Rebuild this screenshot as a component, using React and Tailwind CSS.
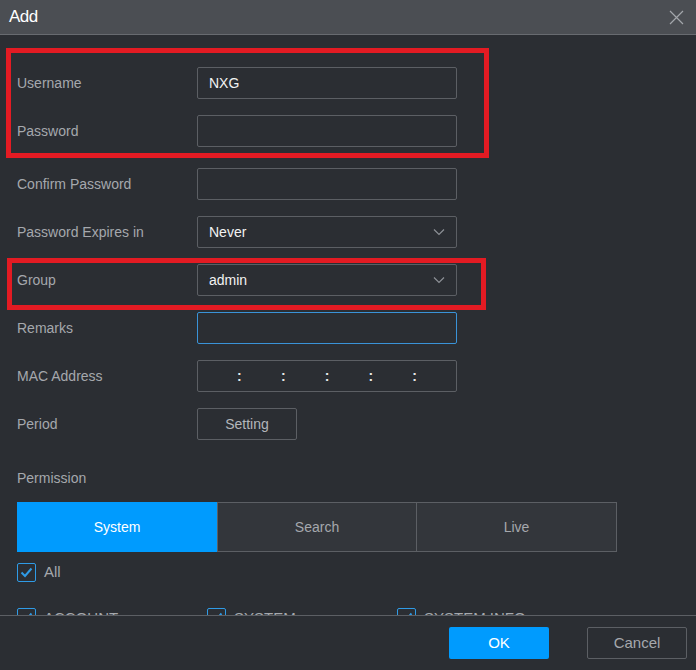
import React from 'react';

const Chevron = () => (
  <svg width="12" height="8" viewBox="0 0 12 8" className="text-[#8d9096]">
    <path d="M1 1.5 L6 6.5 L11 1.5" fill="none" stroke="currentColor" strokeWidth="1.2" />
  </svg>
);

const Check = ({ label }) => (
  <div className="flex items-center gap-[8px]">
    <div className="w-[19px] h-[19px] border border-[#2f9be6] rounded-[2px] flex items-center justify-center">
      <svg width="13" height="11" viewBox="0 0 13 11">
        <path d="M1.5 5.5 L5 9 L11.5 1.5" fill="none" stroke="#2f9be6" strokeWidth="2" />
      </svg>
    </div>
    <span className="text-[15px] text-[#a5a8ad]">{label}</span>
  </div>
);

const Row = ({ label, children, className = 'mb-4' }) => (
  <div className={`flex items-center h-8 ${className}`}>
    <div className="w-[180px] text-[14px] text-[#a5a8ad]">{label}</div>
    {children}
  </div>
);

const Box = ({ children, className = 'border-[#5c5f64]' }) => (
  <div className={`w-[260px] h-8 border rounded-[2px] flex items-center px-[11px] text-[14px] text-[#f2f2f2] ${className}`}>
    {children}
  </div>
);

export default function App() {
  return (
    <div
      className="relative w-[696px] h-[670px] flex flex-col bg-[#2b2e33] overflow-hidden"
      style={{ fontFamily: '"Liberation Sans", Arial, sans-serif' }}
    >
      {/* header */}
      <div className="h-[35px] shrink-0 bg-[#4b4e53] border-b border-[#686b70] flex items-center justify-between pl-[9px] pr-[12px]">
        <span className="text-[17px] text-white tracking-[-0.5px]">Add</span>
        <svg width="15" height="15" viewBox="0 0 15 15" className="text-[#a3a6ab]">
          <path d="M1 1 L14 14 M14 1 L1 14" stroke="currentColor" strokeWidth="1.2" />
        </svg>
      </div>

      {/* body */}
      <div className="flex-1 overflow-hidden px-[17px] pt-[32px]">
        <Row label="Username">
          <Box>NXG</Box>
        </Row>
        <Row label="Password" className="mb-[21px]">
          <Box />
        </Row>
        <Row label="Confirm Password">
          <Box />
        </Row>
        <Row label="Password Expires in">
          <Box>
            <span className="flex-1">Never</span>
            <Chevron />
          </Box>
        </Row>
        <Row label="Group">
          <Box>
            <span className="flex-1">admin</span>
            <Chevron />
          </Box>
        </Row>
        <Row label="Remarks">
          <Box className="border-[#3a93d8]" />
        </Row>
        <Row label="MAC Address">
          <div className="w-[260px] h-8 border border-[#5c5f64] rounded-[2px] flex items-center text-[14px] font-bold text-[#e8e8e8]">
            <span className="flex-1" />:<span className="flex-1" />:<span className="flex-1" />:
            <span className="flex-1" />:<span className="flex-1" />:<span className="flex-1" />
          </div>
        </Row>
        <Row label="Period" className="mb-0">
          <div className="w-[100px] h-8 border border-[#5c5f64] rounded-[2px] flex items-center justify-center text-[14px] text-[#b3b6bb]">
            Setting
          </div>
        </Row>

        <div className="mt-[28px] leading-5 text-[14px] text-[#a5a8ad]">Permission</div>

        <div className="mt-[14px] flex h-[50px]">
          <div className="w-[200px] bg-[#009bfe] flex items-center justify-center text-[14px] text-white">System</div>
          <div className="w-[200px] bg-[#33363b] border border-[#5c5f64] flex items-center justify-center text-[14px] text-[#a5a8ad]">Search</div>
          <div className="w-[200px] bg-[#33363b] border border-l-0 border-[#5c5f64] flex items-center justify-center text-[14px] text-[#a5a8ad]">Live</div>
        </div>

        <div className="mt-[9px]">
          <Check label="All" />
        </div>

        <div className="mt-[23px] flex">
          <div className="w-[190px]"><Check label="ACCOUNT" /></div>
          <div className="w-[190px]"><Check label="SYSTEM" /></div>
          <div className="w-[190px]"><Check label="SYSTEM INFO" /></div>
        </div>
      </div>

      {/* footer */}
      <div className="h-[55px] shrink-0 border-t border-[#5c5f64] flex items-center justify-end pr-[9px] gap-[38px]">
        <div className="w-[100px] h-8 bg-[#009bfe] rounded-[2px] flex items-center justify-center text-[15px] text-white">OK</div>
        <div className="w-[100px] h-8 border border-[#5c5f64] rounded-[2px] flex items-center justify-center text-[15px] text-[#a5a8ad]">Cancel</div>
      </div>

      {/* red annotation boxes */}
      <div className="absolute left-[6px] top-[48px] w-[483px] h-[110px] border-[5px] border-[#e31b23] pointer-events-none" />
      <div className="absolute left-[7px] top-[258px] w-[479px] h-[52px] border-[5px] border-[#e31b23] pointer-events-none" />
    </div>
  );
}
